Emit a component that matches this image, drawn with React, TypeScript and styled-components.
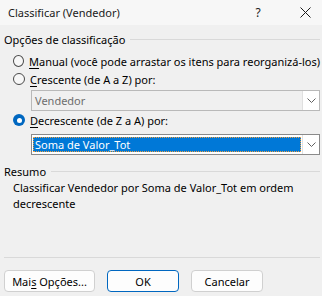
import { createGlobalStyle, styled } from "styled-components";

const GlobalStyle = createGlobalStyle`
  html, body {
    margin: 0;
    padding: 0;
    background: #f0f0f0;
  }
`;

const Window = styled.div`
  width: 322px;
  height: 296px;
  background: #f0f0f0;
  font-family: "Noto Sans", "Open Sans", sans-serif;
  font-size: 11px;
  color: #000;
  display: flex;
  flex-direction: column;
  overflow: hidden;
  white-space: nowrap;
`;

const TitleBar = styled.div`
  height: 25px;
  background: #f7f7f7;
  display: flex;
  align-items: center;
  gap: 23px;
  padding: 0 5px 0 8px;
`;

const Title = styled.span`
  flex: 1;
  color: #1a1a1a;
`;

const TitleButton = styled.span`
  width: 24px;
  height: 25px;
  display: flex;
  align-items: center;
  justify-content: center;
  color: #1a1a1a;
  font-size: 12px;
`;

const Body = styled.div`
  display: flex;
  flex-direction: column;
  padding: 0 2px 0 4px;
`;

const GroupHeader = styled.div<{ $top: number }>`
  height: 16px;
  margin-top: ${(p) => p.$top}px;
  display: flex;
  align-items: center;
  gap: 5px;
  color: #000;

  &::after {
    content: "";
    flex: 1;
    height: 1px;
    background: #d9d9d9;
  }
`;

const RadioRow = styled.label<{ $top?: number }>`
  height: 18px;
  margin-top: ${(p) => p.$top ?? 0}px;
  padding-left: 9px;
  display: flex;
  align-items: center;
  gap: 5px;
`;

const RadioDot = styled.span<{ $checked?: boolean }>`
  box-sizing: border-box;
  width: 12px;
  height: 12px;
  border-radius: 50%;
  border: ${(p) => (p.$checked ? "none" : "1px solid #4a4a4a")};
  background: ${(p) => (p.$checked ? "#0067c0" : "#f7f7f7")};
  display: flex;
  align-items: center;
  justify-content: center;

  &::after {
    content: "";
    display: ${(p) => (p.$checked ? "block" : "none")};
    width: 5px;
    height: 5px;
    border-radius: 50%;
    background: #fff;
  }
`;

const Key = styled.span`
  text-decoration: underline;
  text-underline-offset: 2px;
`;

const Combo = styled.div<{ $top: number; $disabled?: boolean }>`
  box-sizing: border-box;
  height: 21px;
  margin: ${(p) => p.$top}px 0 0 27px;
  border: 1px solid ${(p) => (p.$disabled ? "#b9b9b9" : "#8a8a8a")};
  background: ${(p) => (p.$disabled ? "#f0f0f0" : "#fff")};
  display: flex;
  align-items: stretch;
`;

const ComboValue = styled.div<{ $selected?: boolean; $disabled?: boolean }>`
  flex: 1;
  margin: 2px 1px;
  padding-left: 2px;
  display: flex;
  align-items: center;
  color: ${(p) => (p.$disabled ? "#6d6d6d" : p.$selected ? "#fff" : "#000")};
  background: ${(p) => (p.$selected ? "#0078d7" : "transparent")};
  outline: ${(p) => (p.$selected ? "1px dotted #f0a040" : "none")};
  outline-offset: -1px;
`;

const ComboArrow = styled.div`
  width: 16px;
  background: #fff;
  border-left: 1px solid #e0e0e0;
  display: flex;
  align-items: center;
  justify-content: center;
`;

const Summary = styled.p`
  margin: 1px 0 0 9px;
  line-height: 16px;
  color: #000;
`;

const Separator = styled.div`
  height: 1px;
  margin-top: 45px;
  background: #d9d9d9;
`;

const ButtonBar = styled.div`
  display: flex;
  gap: 12px;
  margin-top: 12px;
`;

const DialogButton = styled.button<{ $width: number; $default?: boolean }>`
  box-sizing: border-box;
  width: ${(p) => p.$width}px;
  height: 22px;
  padding: 0;
  font: inherit;
  color: #000;
  background: #fdfdfd;
  border: 1px solid ${(p) => (p.$default ? "#0067c0" : "#d0d0d0")};
  border-radius: 4px;
`;

const Chevron = () => (
  <svg width="9" height="5" viewBox="0 0 9 5">
    <path d="M0.5 0.5 L4.5 4.5 L8.5 0.5" fill="none" stroke="#606060" strokeWidth="1" />
  </svg>
);

const CloseIcon = () => (
  <svg width="11" height="11" viewBox="0 0 11 11">
    <path d="M0.5 0.5 L10.5 10.5 M10.5 0.5 L0.5 10.5" stroke="#1a1a1a" strokeWidth="1" />
  </svg>
);

const App = () => {
  return (
    <Window>
      <GlobalStyle />
      <TitleBar>
        <Title>Classificar (Vendedor)</Title>
        <TitleButton>?</TitleButton>
        <TitleButton>
          <CloseIcon />
        </TitleButton>
      </TitleBar>
      <Body>
        <GroupHeader $top={6}>Opções de classificação</GroupHeader>
        <RadioRow $top={5}>
          <RadioDot />
          <span>
            <Key>M</Key>anual (você pode arrastar os itens para reorganizá-los)
          </span>
        </RadioRow>
        <RadioRow>
          <RadioDot />
          <span>
            <Key>C</Key>rescente (de A a Z) por:
          </span>
        </RadioRow>
        <Combo $top={2} $disabled>
          <ComboValue $disabled>Vendedor</ComboValue>
          <ComboArrow>
            <Chevron />
          </ComboArrow>
        </Combo>
        <RadioRow>
          <RadioDot $checked />
          <span>
            <Key>D</Key>ecrescente (de Z a A) por:
          </span>
        </RadioRow>
        <Combo $top={5}>
          <ComboValue $selected>Soma de Valor_Tot</ComboValue>
          <ComboArrow>
            <Chevron />
          </ComboArrow>
        </Combo>
        <GroupHeader $top={8}>Resumo</GroupHeader>
        <Summary>
          Classificar Vendedor por Soma de Valor_Tot em ordem
          <br />
          decrescente
        </Summary>
        <Separator />
        <ButtonBar>
          <DialogButton $width={91}>
            Mai<Key>s</Key> Opções...
          </DialogButton>
          <DialogButton $width={72} $default>
            OK
          </DialogButton>
          <DialogButton $width={72}>Cancelar</DialogButton>
        </ButtonBar>
      </Body>
    </Window>
  );
};

export default App;
